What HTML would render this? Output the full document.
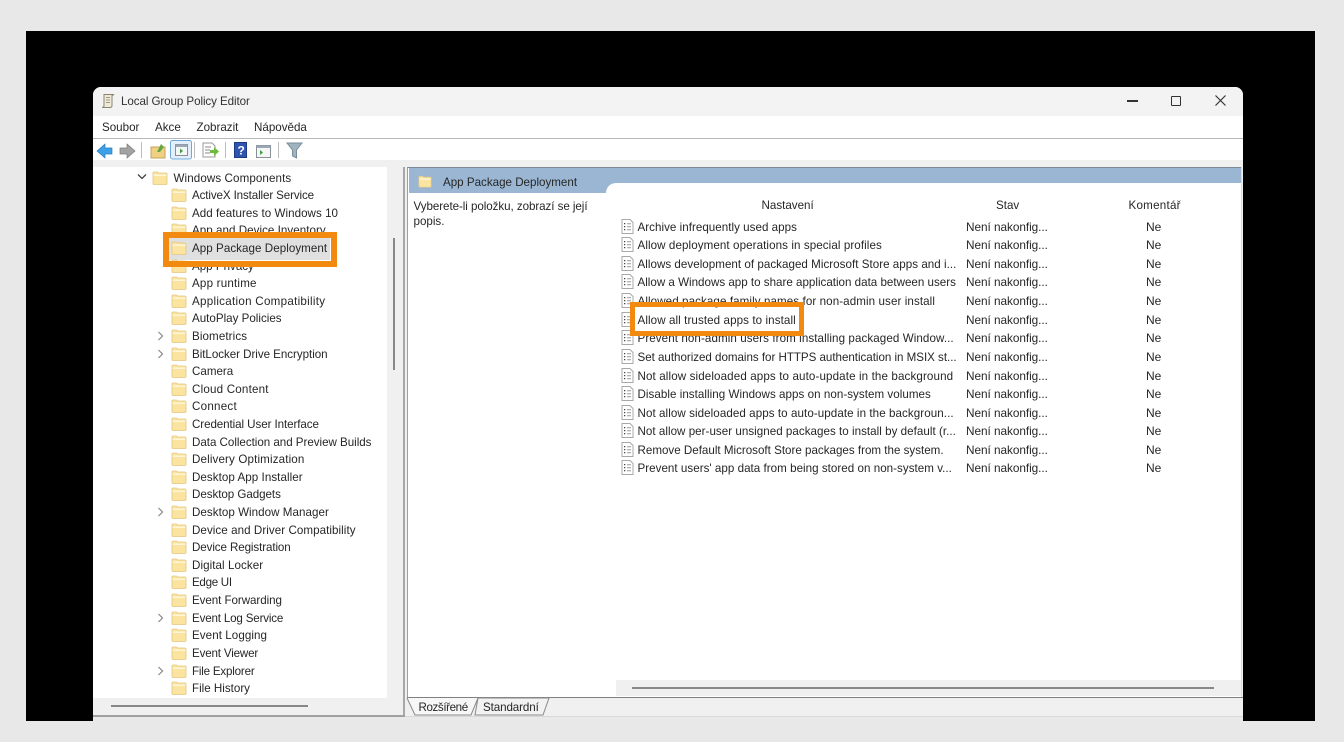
<!DOCTYPE html>
<html><head><meta charset="utf-8"><title>Local Group Policy Editor</title>
<style>
html,body{margin:0;padding:0;width:1344px;height:742px;overflow:hidden;background:#e8e8e8}
body{position:relative;font-family:"Liberation Sans",sans-serif;font-size:11.6px;color:#262626}
.a{position:absolute}
.t{position:absolute;white-space:nowrap;line-height:16px;height:16px;margin-top:1px}
.tr{left:192px}
.f{position:absolute;left:171px;width:16px;height:14px}
.d{position:absolute;left:621px;width:13px;height:15px}
.l{left:637.5px}
.s{left:966px;font-size:11.8px;margin-top:0;letter-spacing:-.05px}
.n{left:1146px;font-size:12px;margin-top:0}
.c{position:absolute;left:157px;width:8px;height:10px}
</style></head><body>
<svg width="0" height="0" style="position:absolute">
<defs>
<symbol id="fo" viewBox="0 0 16 14"><path d="M1 2q0-1 1-1h3.500l1 1h7.500q1 0 1 1v9.500q0 1-1 1h-12q-1 0-1-1z" fill="#fbe49f" stroke="#e2c680" stroke-width=".8"/><path d="M1.500 3.500h13v1.500h-13z" fill="#fef6d8"/></symbol>
<symbol id="do" viewBox="0 0 13 15"><path d="M1 .5h8l3 3v11h-11z" fill="#fff" stroke="#a8a8a8"/><path d="M3 4h1.300v1.300h-1.300zM3 7h1.300v1.300h-1.300zM3 10h1.300v1.300h-1.300z" fill="#444"/><path d="M6 4.700h4M6 7.700h4M6 10.700h4" stroke="#999"/></symbol>
<symbol id="ch" viewBox="0 0 8 10"><path d="M1.500 1l4 4-4 4" fill="none" stroke="#888" stroke-width="1.200"/></symbol>
</defs></svg>

<div class="a" style="left:26px;top:31px;width:1289px;height:690px;background:#000"></div>
<div class="a" style="left:93px;top:87px;width:1150px;height:634px;background:#e9e9e9;border-radius:8px 8px 0 0;overflow:hidden">
  <div class="a" style="left:0;top:0;width:1150px;height:629px;background:#f0f0f0"></div>
  <div class="a" style="left:0;top:0;width:1150px;height:29px;background:#f3f3f3"></div>
  <div class="a" style="left:0;top:29px;width:1150px;height:22px;background:#fff;border-bottom:1px solid #b8b8b8"></div>
  <div class="a" style="left:0;top:52px;width:1150px;height:21px;background:#fff"></div>
</div>

<!-- title -->
<svg class="a" style="left:100px;top:93px" width="16" height="16" viewBox="0 0 16 16"><path d="M4 1.500h10l-2 1v10q0 2-2 2h-8q2 0 2-2z" fill="#efe9d8" stroke="#8a8672"/><path d="M6 4.500h4M6 7h4M6 9.500h4" stroke="#a09b88"/></svg>
<div class="t" style="left:121px;top:93px;color:#333;letter-spacing:-.08px">Local Group Policy Editor</div>
<div class="a" style="left:1127px;top:100px;width:11px;height:1.500px;background:#333"></div>
<div class="a" style="left:1171px;top:96px;width:8px;height:8px;border:1.500px solid #333;border-radius:1px"></div>
<svg class="a" style="left:1215px;top:95px" width="11" height="11" viewBox="0 0 11 11"><path d="M.500.500l10 10M10.500.500l-10 10" stroke="#333" stroke-width="1.200"/></svg>

<!-- menu -->
<div class="t" style="left:102px;top:119px">Soubor</div>
<div class="t" style="left:155px;top:119px">Akce</div>
<div class="t" style="left:196.500px;top:119px">Zobrazit</div>
<div class="t" style="left:254px;top:119px">Nápověda</div>

<!-- toolbar -->
<svg class="a" style="left:95px;top:140px" width="215" height="24" viewBox="0 0 215 24">
<path d="M2 11l8-7v4h7v6h-7v4z" fill="#3ca0e6" stroke="#2a7fbe" stroke-width=".7"/>
<path d="M40 11l-8-7v4h-7v6h7v4z" fill="#a3a3a3" stroke="#7c7c7c" stroke-width=".7"/>
<path d="M46.500 2v16" stroke="#bcbcbc"/>
<path d="M56 7h14v11h-14z" fill="#f0d184" stroke="#c3a35b"/><path d="M62 12l4-8 3 3-4 5z" fill="#62a83c"/>
<rect x="75.500" y=".5" width="21" height="18.500" rx="2" fill="#e3effa" stroke="#6ea9dc"/>
<rect x="80.500" y="4.500" width="12" height="11" fill="#f4f6f8" stroke="#8a8f96"/><path d="M80.500 4.500h12v2.500h-12z" fill="#9aa7b5"/><path d="M88 11l-3-2.500v5z" fill="#3f9c3f"/>
<path d="M99.500 2v16" stroke="#bcbcbc"/>
<path d="M108 3h9l3 3v11h-12z" fill="#fff" stroke="#9a9a9a"/><path d="M110 7h6M110 10h5M110 13h5" stroke="#888"/><path d="M115 10h4v-3l5 4.500-5 4.500v-3h-4z" fill="#6cbb3c"/>
<path d="M130.500 2v16" stroke="#bcbcbc"/>
<rect x="139.500" y="2.500" width="12" height="15" fill="#2f55b0" stroke="#1d3a85"/><text x="142.500" y="14.500" font-family="Liberation Sans" font-weight="bold" font-size="12" fill="#fff">?</text>
<rect x="161.500" y="5.500" width="14" height="12" fill="#f4f6f8" stroke="#8a8f96"/><path d="M161.500 5.500h14v2.500h-14z" fill="#9aa7b5"/><path d="M165 10l3 2.500-3 2.500z" fill="#3f9c3f"/>
<path d="M183.500 2v16" stroke="#bcbcbc"/>
<path d="M192 3h15l-5.500 7v8l-4-2v-6z" fill="#9fb3c0" stroke="#7a8c99"/>
</svg>

<!-- tree pane -->
<div class="a" style="left:93px;top:167px;width:294px;height:531px;background:#fff"></div>
<div class="a" style="left:393px;top:238px;width:2px;height:132px;background:#888"></div>
<div class="a" style="left:111px;top:705px;width:197px;height:2px;background:#888"></div>
<div class="a" style="left:403px;top:167px;width:1.500px;height:548px;background:#a8a8a8"></div>
<div class="a" style="left:93px;top:715px;width:312px;height:1.500px;background:#a0a0a0"></div>
<div class="a" style="left:405px;top:716px;width:838px;height:1px;background:#d8d8d8"></div>

<svg class="a" style="left:137px;top:173px" width="10" height="8" viewBox="0 0 10 8"><path d="M1 1.500l4 4 4-4" fill="none" stroke="#444" stroke-width="1.300"/></svg>
<svg class="f" style="left:152px;top:171px"><use href="#fo"/></svg>
<div class="t" style="left:173.500px;top:170px;letter-spacing:.1px">Windows Components</div>

<svg class="f" style="top:188px"><use href="#fo"/></svg><div class="t tr" style="top:187px;letter-spacing:-.12px">ActiveX Installer Service</div>
<svg class="f" style="top:206px"><use href="#fo"/></svg><div class="t tr" style="top:205px;letter-spacing:.04px">Add features to Windows 10</div>
<svg class="f" style="top:223px"><use href="#fo"/></svg><div class="t tr" style="top:222px;letter-spacing:.04px">App and Device Inventory</div>
<div class="a" style="left:168px;top:238px;width:162px;height:22px;background:#e0e0e0"></div>
<svg class="f" style="top:241px"><use href="#fo"/></svg><div class="t tr" style="top:240px;letter-spacing:.05px">App Package Deployment</div>
<svg class="f" style="top:259px"><use href="#fo"/></svg><div class="t tr" style="top:258px">App Privacy</div>
<svg class="f" style="top:276px"><use href="#fo"/></svg><div class="t tr" style="top:275px;letter-spacing:.2px">App runtime</div>
<svg class="f" style="top:294px"><use href="#fo"/></svg><div class="t tr" style="top:293px;letter-spacing:.28px">Application Compatibility</div>
<svg class="f" style="top:311px"><use href="#fo"/></svg><div class="t tr" style="top:310px">AutoPlay Policies</div>
<svg class="c" style="top:331px"><use href="#ch"/></svg><svg class="f" style="top:329px"><use href="#fo"/></svg><div class="t tr" style="top:328px;letter-spacing:.1px">Biometrics</div>
<svg class="c" style="top:349px"><use href="#ch"/></svg><svg class="f" style="top:347px"><use href="#fo"/></svg><div class="t tr" style="top:346px;letter-spacing:-.04px">BitLocker Drive Encryption</div>
<svg class="f" style="top:364px"><use href="#fo"/></svg><div class="t tr" style="top:363px">Camera</div>
<svg class="f" style="top:382px"><use href="#fo"/></svg><div class="t tr" style="top:381px;letter-spacing:.2px">Cloud Content</div>
<svg class="f" style="top:399px"><use href="#fo"/></svg><div class="t tr" style="top:398px;letter-spacing:.25px">Connect</div>
<svg class="f" style="top:417px"><use href="#fo"/></svg><div class="t tr" style="top:416px;letter-spacing:-.08px">Credential User Interface</div>
<svg class="f" style="top:435px"><use href="#fo"/></svg><div class="t tr" style="top:434px;letter-spacing:-.03px">Data Collection and Preview Builds</div>
<svg class="f" style="top:452px"><use href="#fo"/></svg><div class="t tr" style="top:451px;letter-spacing:.14px">Delivery Optimization</div>
<svg class="f" style="top:470px"><use href="#fo"/></svg><div class="t tr" style="top:469px;letter-spacing:.05px">Desktop App Installer</div>
<svg class="f" style="top:487px"><use href="#fo"/></svg><div class="t tr" style="top:486px;letter-spacing:-.05px">Desktop Gadgets</div>
<svg class="c" style="top:507px"><use href="#ch"/></svg><svg class="f" style="top:505px"><use href="#fo"/></svg><div class="t tr" style="top:504px;letter-spacing:.04px">Desktop Window Manager</div>
<svg class="f" style="top:523px"><use href="#fo"/></svg><div class="t tr" style="top:522px;letter-spacing:.06px">Device and Driver Compatibility</div>
<svg class="f" style="top:540px"><use href="#fo"/></svg><div class="t tr" style="top:539px;letter-spacing:-.1px">Device Registration</div>
<svg class="f" style="top:558px"><use href="#fo"/></svg><div class="t tr" style="top:557px;letter-spacing:.07px">Digital Locker</div>
<svg class="f" style="top:575px"><use href="#fo"/></svg><div class="t tr" style="top:574px;letter-spacing:-.3px">Edge UI</div>
<svg class="f" style="top:593px"><use href="#fo"/></svg><div class="t tr" style="top:592px;letter-spacing:-.06px">Event Forwarding</div>
<svg class="c" style="top:613px"><use href="#ch"/></svg><svg class="f" style="top:611px"><use href="#fo"/></svg><div class="t tr" style="top:610px;letter-spacing:-.17px">Event Log Service</div>
<svg class="f" style="top:628px"><use href="#fo"/></svg><div class="t tr" style="top:627px;letter-spacing:.07px">Event Logging</div>
<svg class="f" style="top:646px"><use href="#fo"/></svg><div class="t tr" style="top:645px;letter-spacing:-.17px">Event Viewer</div>
<svg class="c" style="top:666px"><use href="#ch"/></svg><svg class="f" style="top:664px"><use href="#fo"/></svg><div class="t tr" style="top:663px;letter-spacing:-.2px">File Explorer</div>
<svg class="f" style="top:681px"><use href="#fo"/></svg><div class="t tr" style="top:680px">File History</div>

<!-- right pane -->
<div class="a" style="left:407px;top:167px;width:834px;height:530px;background:#fff;border-top:1.500px solid #7c8894;border-left:1.500px solid #a0a0a0;box-sizing:border-box"></div>
<div class="a" style="left:409px;top:168px;width:832px;height:25px;background:#9ab6d3"></div>
<div class="a" style="left:606px;top:183px;width:635px;height:12px;background:#fff;border-radius:10px 0 0 0"></div>
<div class="a" style="left:1241px;top:167px;width:1px;height:530px;background:#dcdcdc"></div>
<svg class="a" style="left:418px;top:175px;width:14px;height:13px"><use href="#fo"/></svg>
<div class="t" style="left:443px;top:174px">App Package Deployment</div>
<div class="t" style="left:413.500px;top:198px;letter-spacing:-.06px">Vyberete-li položku, zobrazí se její</div>
<div class="t" style="left:413.500px;top:213px">popis.</div>

<div class="t" style="left:761.500px;top:197px">Nastavení</div>
<div class="t" style="left:996px;top:197px">Stav</div>
<div class="t" style="left:1128.500px;top:197px;letter-spacing:.25px">Komentář</div>

<svg class="d" style="top:219px"><use href="#do"/></svg><div class="t l" style="top:219px;letter-spacing:.03px">Archive infrequently used apps</div><div class="t s" style="top:219px">Není nakonfig...</div><div class="t n" style="top:219px">Ne</div>
<svg class="d" style="top:237px"><use href="#do"/></svg><div class="t l" style="top:237px;letter-spacing:.085px">Allow deployment operations in special profiles</div><div class="t s" style="top:237px">Není nakonfig...</div><div class="t n" style="top:237px">Ne</div>
<svg class="d" style="top:256px"><use href="#do"/></svg><div class="t l" style="top:256px;letter-spacing:.03px">Allows development of packaged Microsoft Store apps and i...</div><div class="t s" style="top:256px">Není nakonfig...</div><div class="t n" style="top:256px">Ne</div>
<svg class="d" style="top:274px"><use href="#do"/></svg><div class="t l" style="top:274px">Allow a Windows app to share application data between users</div><div class="t s" style="top:274px">Není nakonfig...</div><div class="t n" style="top:274px">Ne</div>
<svg class="d" style="top:293px"><use href="#do"/></svg><div class="t l" style="top:293px;letter-spacing:.09px">Allowed package family names for non-admin user install</div><div class="t s" style="top:293px">Není nakonfig...</div><div class="t n" style="top:293px">Ne</div>
<svg class="d" style="top:312px"><use href="#do"/></svg><div class="t s" style="top:312px">Není nakonfig...</div><div class="t n" style="top:312px">Ne</div>
<svg class="d" style="top:330px"><use href="#do"/></svg><div class="t l" style="top:330px;letter-spacing:.086px">Prevent non-admin users from installing packaged Window...</div><div class="t s" style="top:330px">Není nakonfig...</div><div class="t n" style="top:330px">Ne</div>
<svg class="d" style="top:349px"><use href="#do"/></svg><div class="t l" style="top:349px;letter-spacing:-.03px">Set authorized domains for HTTPS authentication in MSIX st...</div><div class="t s" style="top:349px">Není nakonfig...</div><div class="t n" style="top:349px">Ne</div>
<svg class="d" style="top:368px"><use href="#do"/></svg><div class="t l" style="top:368px;letter-spacing:.12px">Not allow sideloaded apps to auto-update in the background</div><div class="t s" style="top:368px">Není nakonfig...</div><div class="t n" style="top:368px">Ne</div>
<svg class="d" style="top:386px"><use href="#do"/></svg><div class="t l" style="top:386px;letter-spacing:.04px">Disable installing Windows apps on non-system volumes</div><div class="t s" style="top:386px">Není nakonfig...</div><div class="t n" style="top:386px">Ne</div>
<svg class="d" style="top:405px"><use href="#do"/></svg><div class="t l" style="top:405px;letter-spacing:.07px">Not allow sideloaded apps to auto-update in the backgroun...</div><div class="t s" style="top:405px">Není nakonfig...</div><div class="t n" style="top:405px">Ne</div>
<svg class="d" style="top:423px"><use href="#do"/></svg><div class="t l" style="top:423px;letter-spacing:.03px">Not allow per-user unsigned packages to install by default (r...</div><div class="t s" style="top:423px">Není nakonfig...</div><div class="t n" style="top:423px">Ne</div>
<svg class="d" style="top:442px"><use href="#do"/></svg><div class="t l" style="top:442px">Remove Default Microsoft Store packages from the system.</div><div class="t s" style="top:442px">Není nakonfig...</div><div class="t n" style="top:442px">Ne</div>
<svg class="d" style="top:460px"><use href="#do"/></svg><div class="t l" style="top:460px;letter-spacing:.03px">Prevent users' app data from being stored on non-system v...</div><div class="t s" style="top:460px">Není nakonfig...</div><div class="t n" style="top:460px">Ne</div>

<!-- right scrollbar -->
<div class="a" style="left:616px;top:680px;width:625px;height:16px;background:#f0f0f0"></div>
<div class="a" style="left:632px;top:686.500px;width:582px;height:2px;background:#888"></div>
<div class="a" style="left:407px;top:696.500px;width:836px;height:1.500px;background:#808080"></div>

<!-- tabs -->
<svg class="a" style="left:405px;top:697px" width="150" height="20" viewBox="0 0 150 20">
<path d="M70 18h68l6-17H73z" fill="#f2f2f2" stroke="#8a8a8a"/>
<path d="M2 1l8 17h56l7-17" fill="#f7f7f7" stroke="#8a8a8a"/>
</svg>
<div class="t" style="left:418.500px;top:699px;letter-spacing:-.4px">Rozšířené</div>
<div class="t" style="left:483px;top:699px;letter-spacing:-.1px">Standardní</div>

<!-- orange highlight boxes -->
<div class="a" style="left:163px;top:232px;width:174px;height:35px;border:6px solid #f28a0f;box-sizing:border-box"></div>
<div class="a" style="left:630px;top:302px;width:174px;height:34px;border:5.500px solid #f28a0f;box-sizing:border-box"></div>
<div class="a" style="left:635.500px;top:307.500px;width:163px;height:23px;background:#fff"></div>
<div class="t l" style="top:312px;letter-spacing:.09px">Allow all trusted apps to install</div>
</body></html>
